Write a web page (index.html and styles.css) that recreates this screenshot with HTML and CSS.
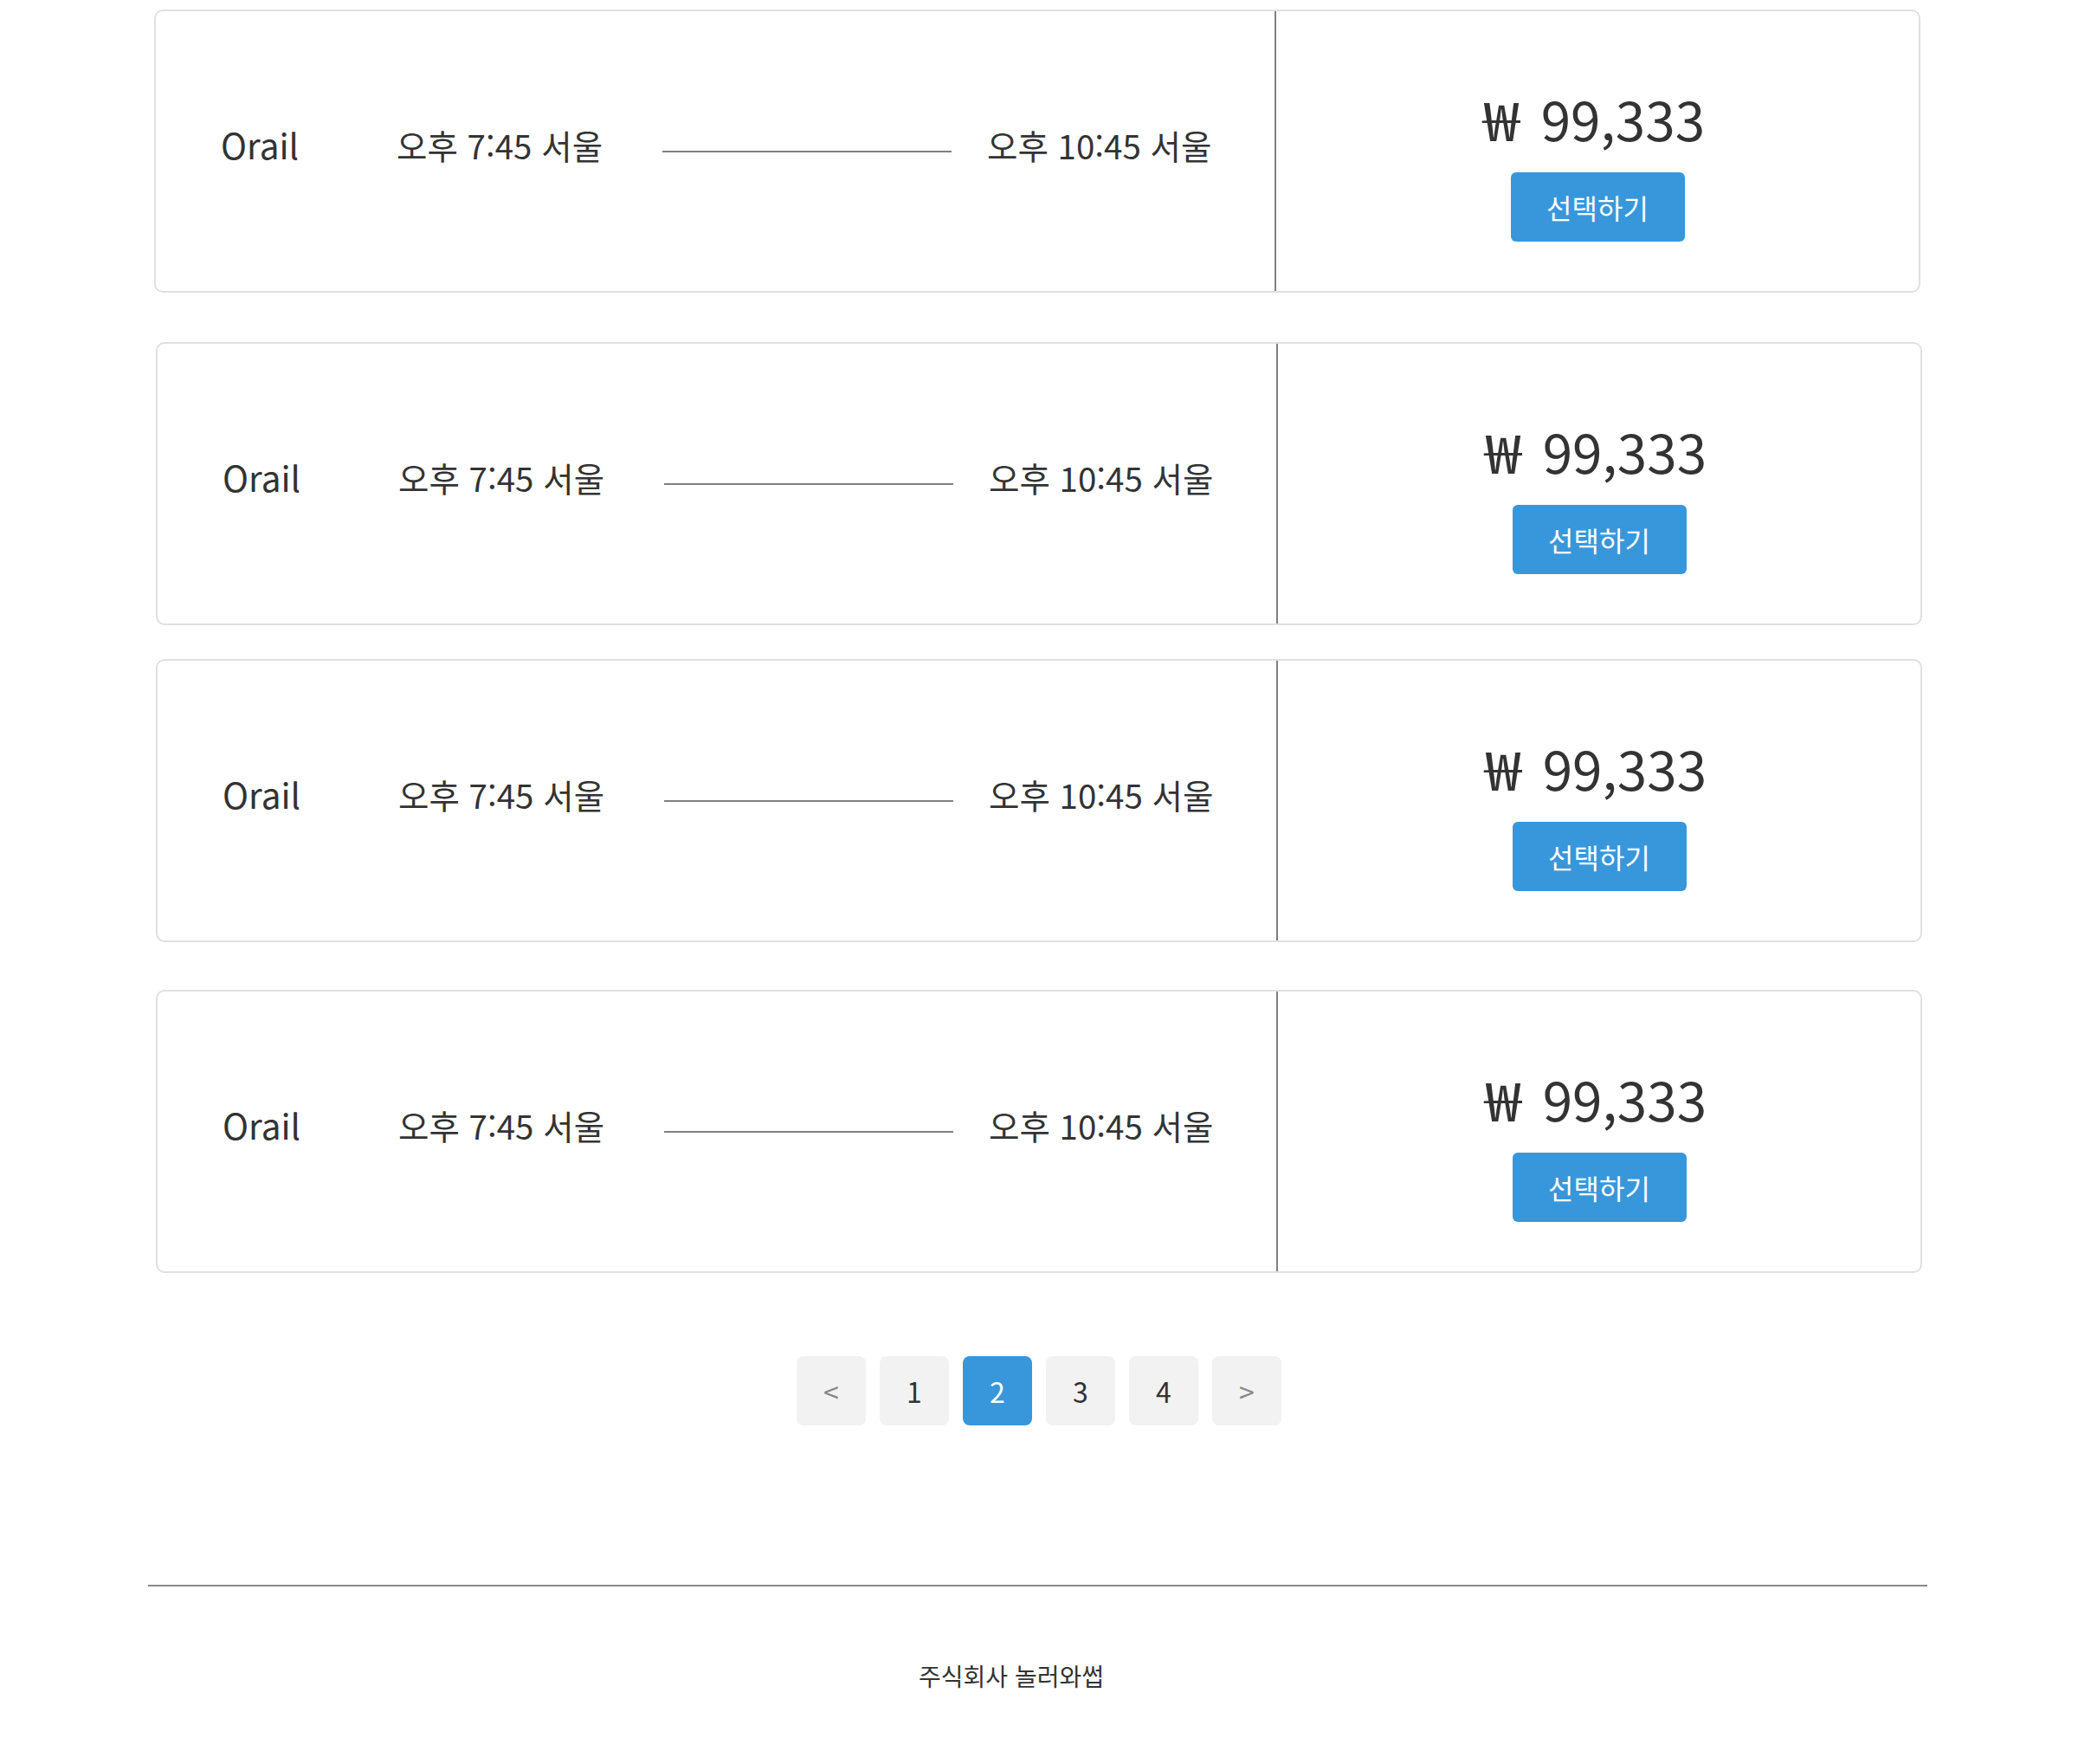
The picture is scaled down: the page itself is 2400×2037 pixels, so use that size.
FILE: index.html
```html
<!DOCTYPE html>
<html lang="ko">
<head>
<meta charset="utf-8">
<title>열차 선택</title>
<link rel="stylesheet" href="styles.css">
</head>
<body>
<main class="list">
  <div class="card">
    <div class="trip">
      <span class="company">Orail</span>
      <span class="time dep">오후 7:45 서울</span>
      <span class="route"></span>
      <span class="time arr">오후 10:45 서울</span>
    </div>
    <div class="fare">
      <div class="price"><span class="won">₩</span> 99,333</div>
      <button class="select">선택하기</button>
    </div>
  </div>
  <div class="card">
    <div class="trip">
      <span class="company">Orail</span>
      <span class="time dep">오후 7:45 서울</span>
      <span class="route"></span>
      <span class="time arr">오후 10:45 서울</span>
    </div>
    <div class="fare">
      <div class="price"><span class="won">₩</span> 99,333</div>
      <button class="select">선택하기</button>
    </div>
  </div>
  <div class="card">
    <div class="trip">
      <span class="company">Orail</span>
      <span class="time dep">오후 7:45 서울</span>
      <span class="route"></span>
      <span class="time arr">오후 10:45 서울</span>
    </div>
    <div class="fare">
      <div class="price"><span class="won">₩</span> 99,333</div>
      <button class="select">선택하기</button>
    </div>
  </div>
  <div class="card">
    <div class="trip">
      <span class="company">Orail</span>
      <span class="time dep">오후 7:45 서울</span>
      <span class="route"></span>
      <span class="time arr">오후 10:45 서울</span>
    </div>
    <div class="fare">
      <div class="price"><span class="won">₩</span> 99,333</div>
      <button class="select">선택하기</button>
    </div>
  </div>
</main>
<nav class="pager">
  <a class="page arrow">&lt;</a>
  <a class="page">1</a>
  <a class="page active">2</a>
  <a class="page">3</a>
  <a class="page">4</a>
  <a class="page arrow">&gt;</a>
</nav>
<footer class="footer">
  <p class="company-name">주식회사 놀러와썹</p>
</footer>
</body>
</html>
```

FILE: styles.css
```css
* {
  box-sizing: border-box;
}

body {
  margin: 0;
  font-family: "Noto Sans CJK KR", "Noto Sans", sans-serif;
  color: #333;
  background: #fff;
}

.list {
  padding-top: 11px;
}

.card {
  display: flex;
  width: 2040px;
  height: 327px;
  margin-left: 180px;
  border: 2px solid #e0e0e0;
  border-radius: 10px;
}

.card:nth-child(1) {
  margin-left: 178px;
  margin-bottom: 57px;
}

.card:nth-child(2) {
  margin-bottom: 39px;
}

.card:nth-child(3) {
  margin-bottom: 55px;
}

.trip {
  flex: none;
  width: 1292px;
  display: flex;
  align-items: center;
  padding-left: 75px;
  font-size: 38.5px;
}

.company,
.time {
  margin-bottom: 16px;
  white-space: nowrap;
}

.company {
  width: 203px;
  font-size: 40.5px;
}

.dep {
  width: 307px;
}

.route {
  width: 334px;
  height: 2px;
  background: #808080;
  margin-right: 41px;
}

.fare {
  flex: 1;
  border-left: 2px solid #808080;
  display: flex;
  flex-direction: column;
  align-items: center;
  justify-content: center;
  padding-top: 20px;
}

.price {
  font-size: 62px;
  line-height: 90px;
  white-space: nowrap;
  margin-right: 8px;
}

.won {
  display: inline-block;
  transform: scaleX(1.22);
  transform-origin: left center;
  margin-right: 15px;
}

.select {
  margin-top: 18px;
  width: 201px;
  height: 80px;
  border: none;
  border-radius: 6px;
  background: #3897db;
  color: #fff;
  font-family: inherit;
  font-size: 32px;
}

.pager {
  display: flex;
  justify-content: center;
  gap: 16px;
  margin-top: 96px;
}

.page {
  width: 80px;
  height: 80px;
  display: flex;
  align-items: center;
  justify-content: center;
  background: #f2f2f2;
  border-radius: 8px;
  font-size: 32px;
  color: #333;
}

.page.arrow {
  color: #888;
}

.page.active {
  background: #3897db;
  color: #fff;
}

.footer {
  width: 2055px;
  margin: 184px 0 0 171px;
  border-top: 2px solid #888;
}

.company-name {
  margin: 83px 0 0;
  padding-right: 61px;
  text-align: center;
  font-size: 28px;
}
```
